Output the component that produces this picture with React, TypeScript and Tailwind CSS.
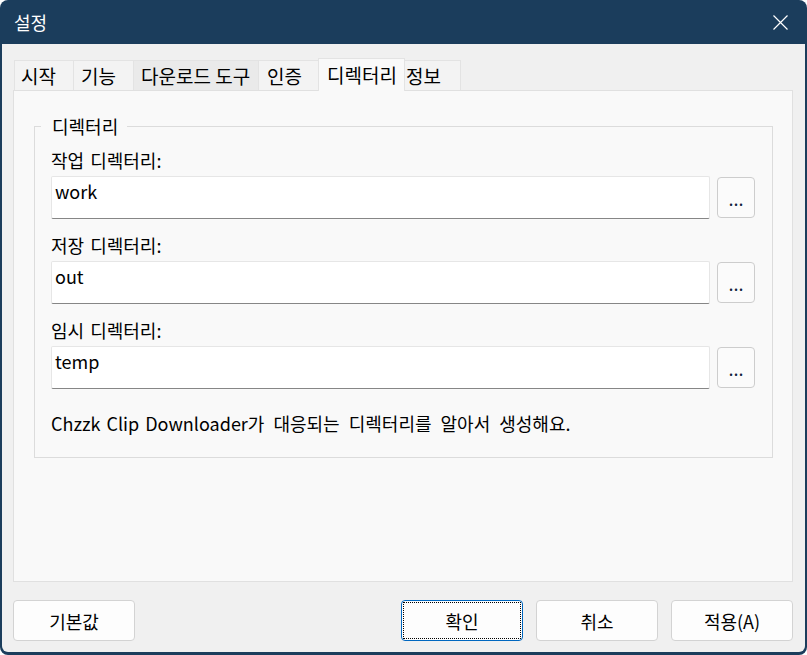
export default function App() {
  const rows = [
    { label: "작업 디렉터리:", value: "work" },
    { label: "저장 디렉터리:", value: "out" },
    { label: "임시 디렉터리:", value: "temp" },
  ];
  return (
    <div className="w-[807px] h-[655px] bg-white font-['Noto_Sans_CJK_KR','Noto_Sans',sans-serif] text-[18px] leading-[24px] text-black">
      <div className="w-full h-full rounded-[8px] bg-[#1b3d5c] flex flex-col overflow-hidden">
        {/* title bar */}
        <div className="h-[44px] flex items-center justify-between pl-[14px] pr-[19px] shrink-0">
          <span className="text-white">설정</span>
          <svg width="15" height="15" viewBox="0 0 15 15" fill="none">
            <path d="M0.5 0.5 L14.5 14.5 M14.5 0.5 L0.5 14.5" stroke="white" strokeWidth="1.2" />
          </svg>
        </div>
        {/* body */}
        <div className="flex-1 mx-[2px] mb-[3px] bg-[#f0f0f0] rounded-b-[6px] flex flex-col pt-[14px]">
          {/* tabs */}
          <div className="h-[32px] flex items-end pl-[12px] shrink-0 text-[19px]">
            <div className="w-[59px] h-[30px] flex items-center pl-[6px] border-t border-l border-[#e3e3e3] bg-[#f3f3f3]">시작</div>
            <div className="w-[60px] h-[30px] flex items-center pl-[7px] border-t border-l border-[#e3e3e3] bg-[#f3f3f3]">기능</div>
            <div className="w-[125px] h-[30px] flex items-center pl-[7px] border-t border-l border-[#e3e3e3] bg-[#eaeaea] whitespace-nowrap">다운로드 도구</div>
            <div className="w-[60px] h-[30px] flex items-center pl-[8px] border-t border-l border-[#e3e3e3] bg-[#f3f3f3]">인증</div>
            <div className="w-[87px] h-[33px] -mb-px relative z-10 flex items-center pl-[8px] pb-px border-t border-x border-[#e3e3e3] bg-[#f9f9f9] whitespace-nowrap">디렉터리</div>
            <div className="w-[56px] h-[30px] flex items-center pl-[1px] border-t border-r border-[#e3e3e3] bg-[#f3f3f3]">정보</div>
          </div>
          {/* panel */}
          <div className="h-[492px] ml-[11px] mr-[12px] border border-[#e0e0e0] bg-[#f9f9f9] shrink-0 flex flex-col">
            <fieldset className="mt-[23px] ml-[20px] mr-[19px] border border-[#dcdcdc] px-[6px] pb-[22px]">
              <legend className="pl-[11px] pr-[9px] leading-[24px]">디렉터리</legend>
              <div className="pl-[10px] pr-[11px] pt-[10px] flex flex-col">
                {rows.map((r, i) => (
                  <div key={r.value} className={i === 0 ? "flex flex-col" : "flex flex-col mt-[14px]"}>
                    <div className="mb-[4px] [word-spacing:2px]">{r.label}</div>
                    <div className="flex gap-[7px]">
                      <div className="flex-1 h-[43px] bg-white border border-[#e6e6e6] border-b-[#868686] rounded-[2px] pl-[3px] pt-[2px]">
                        {r.value}
                      </div>
                      <div className="w-[38px] h-[41px] mt-px bg-[#fbfbfb] border border-[#cdcdcd] rounded-[4px] flex items-center justify-center text-[#14243c]">
                        ...
                      </div>
                    </div>
                  </div>
                ))}
                <div className="mt-[22px] whitespace-nowrap">
                  <span className="[word-spacing:2px]">Chzzk Clip Downloader</span>
                  <span className="[word-spacing:5px]">가 대응되는 디렉터리를 알아서 생성해요.</span>
                </div>
              </div>
            </fieldset>
          </div>
          {/* buttons */}
          <div className="mt-[18px] h-[41px] flex justify-between pl-[11px] pr-[12px] shrink-0">
            <div className="w-[122px] h-[41px] bg-[#fdfdfd] border border-[#d3d3d3] rounded-[4px] flex items-center justify-center">기본값</div>
            <div className="flex gap-[13px]">
              <div className="w-[122px] h-[41px] bg-[#fdfdfd] border border-[#0067c0] rounded-[4px] flex p-px">
                <div className="flex-1 border border-dotted border-black flex items-center justify-center">확인</div>
              </div>
              <div className="w-[122px] h-[41px] bg-[#fdfdfd] border border-[#d3d3d3] rounded-[4px] flex items-center justify-center">취소</div>
              <div className="w-[122px] h-[41px] bg-[#fdfdfd] border border-[#d3d3d3] rounded-[4px] flex items-center justify-center">적용(A)</div>
            </div>
          </div>
        </div>
      </div>
    </div>
  );
}
